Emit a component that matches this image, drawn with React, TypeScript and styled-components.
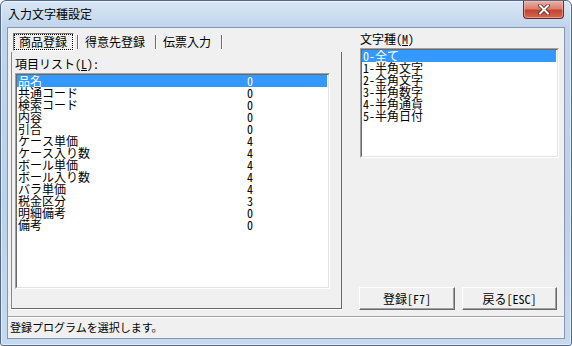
import React from 'react';
import styled, { createGlobalStyle } from 'styled-components';

const Global = createGlobalStyle`
  html, body { margin: 0; padding: 0; background: #ffffff; }
  body { width: 572px; height: 346px; overflow: hidden; }
  * { box-sizing: border-box; }
`;

const MONO = `"Noto Sans Mono CJK JP", "Noto Sans CJK JP", sans-serif`;
const UI = `"Noto Sans CJK JP", sans-serif`;

const Window = styled.div`
  width: 572px;
  height: 346px;
  border: 1px solid #52698a;
  border-radius: 6px 6px 3px 3px;
  background: linear-gradient(#d9e7f6, #c0d5ec 26px, #bcd2ea 60%, #c6daef);
  display: flex;
  flex-direction: column;
  padding: 0 6px 6px 6px;
  box-shadow: inset 0 0 0 1px rgba(255, 255, 255, 0.55);
`;

const TitleBar = styled.div`
  height: 26px;
  display: flex;
  align-items: flex-start;
  justify-content: space-between;
`;

const Title = styled.div`
  font-family: ${UI};
  font-size: 12px;
  line-height: 26px;
  padding-left: 1px;
  color: #000;
`;

const CloseButton = styled.div`
  width: 41px;
  height: 18px;
  margin-right: 1px;
  border: 1px solid #6b2b26;
  border-top: none;
  border-radius: 0 0 4px 4px;
  background: linear-gradient(#eab0a2, #d9806f 45%, #c4442f 55%, #d26a52);
  box-shadow: inset 0 0 0 1px rgba(255, 200, 190, 0.5);
  display: flex;
  align-items: center;
  justify-content: center;
`;

const Client = styled.div`
  flex: 1;
  background: #f0f0f0;
  border: 1px solid #8696ab;
  display: flex;
  flex-direction: column;
`;

const Main = styled.div`
  flex: 1;
  display: flex;
`;

const LeftCol = styled.div`
  width: 334px;
  padding: 3px 0 7px 3px;
  display: flex;
  flex-direction: column;
`;

const TabStrip = styled.div`
  height: 21px;
  display: flex;
  align-items: center;
  padding-left: 2px;
`;

const Tab = styled.div<{ $active?: boolean }>`
  height: 18px;
  padding: 0 6px 0 5px;
  font-family: ${UI};
  font-size: 12px;
  line-height: 16px;
  color: #000;
  border: 1px solid transparent;
  ${(p) =>
    p.$active &&
    `
    border-color: #7a7a7a #ffffff #ffffff #7a7a7a;
    outline: 1px dotted #000;
    outline-offset: -2px;
  `}
`;

const TabSep = styled.div`
  width: 2px;
  height: 14px;
  margin-left: 3px;
  border-left: 1px solid #6d6d6d;
  border-right: 1px solid #ffffff;
`;

const TabPage = styled.div`
  flex: 1;
  border-left: 1px solid #8a8a8a;
  border-right: 1px solid #6a6a6a;
  border-bottom: 1px solid #6a6a6a;
  box-shadow: 0 1px 0 #ffffff;
  padding: 4px 0 0 3px;
  display: flex;
  flex-direction: column;
`;

const FieldLabel = styled.div`
  font-family: ${MONO};
  font-size: 12px;
  height: 17px;
  line-height: 16px;
  color: #000;
`;

const ListOuter = styled.div<{ $w: number; $h: number }>`
  width: ${(p) => p.$w}px;
  height: ${(p) => p.$h}px;
  border: 1px solid;
  border-color: #a0a0a0 #ffffff #ffffff #a0a0a0;
`;

const ListInner = styled.div`
  width: 100%;
  height: 100%;
  border: 1px solid;
  border-color: #696969 #e3e3e3 #e3e3e3 #696969;
  background: #ffffff;
  overflow: hidden;
`;

const Row = styled.div<{ $sel?: boolean }>`
  height: 12px;
  line-height: 12px;
  font-family: ${MONO};
  font-size: 12px;
  padding-left: 1px;
  display: grid;
  grid-template-columns: 229px 1fr;
  white-space: nowrap;
  color: ${(p) => (p.$sel ? '#ffffff' : '#000000')};
  background: ${(p) => (p.$sel ? '#3399ff' : 'transparent')};
  margin-right: 1px;
`;

const RightCol = styled.div`
  flex: 1;
  padding: 3px 0 6px 18px;
  display: flex;
  flex-direction: column;
`;

const Spacer = styled.div`
  flex: 1;
`;

const ButtonRow = styled.div`
  display: flex;
  gap: 7px;
  margin-left: -1px;
`;

const Button = styled.div<{ $w: number }>`
  width: ${(p) => p.$w}px;
  height: 23px;
  border: 1px solid;
  border-color: #ffffff #696969 #696969 #ffffff;
  box-shadow: inset -1px -1px 0 #a0a0a0;
  background: #f0f0f0;
  font-family: ${MONO};
  font-size: 12px;
  line-height: 21px;
  text-align: center;
  color: #000;
`;

const StatusBar = styled.div`
  height: 22px;
  border-top: 1px solid #a0a0a0;
  box-shadow: inset 0 1px 0 #ffffff;
  padding-left: 2px;
  font-family: ${UI};
  font-size: 11px;
  letter-spacing: 0;
  line-height: 20px;
  color: #000;
`;

const items: [string, string][] = [
  ['品名', '0'],
  ['共通コード', '0'],
  ['検索コード', '0'],
  ['内容', '0'],
  ['引合', '0'],
  ['ケース単価', '4'],
  ['ケース入り数', '4'],
  ['ボール単価', '4'],
  ['ボール入り数', '4'],
  ['バラ単価', '4'],
  ['税金区分', '3'],
  ['明細備考', '0'],
  ['備考', '0'],
];

const kinds = ['0-全て', '1-半角文字', '2-全角文字', '3-半角数字', '4-半角通貨', '5-半角日付'];

export default function App() {
  return (
    <>
      <Global />
      <Window>
        <TitleBar>
          <Title>入力文字種設定</Title>
          <CloseButton>
            <svg width="12" height="11" viewBox="0 0 12 11">
              <path d="M2 1.5 L10 9.5 M10 1.5 L2 9.5" stroke="#5a2020" strokeWidth="3.6" strokeLinecap="square" />
              <path d="M2 1.5 L10 9.5 M10 1.5 L2 9.5" stroke="#ffffff" strokeWidth="2" strokeLinecap="square" />
            </svg>
          </CloseButton>
        </TitleBar>
        <Client>
          <Main>
            <LeftCol>
              <TabStrip>
                <Tab $active>商品登録</Tab>
                <TabSep />
                <Tab>得意先登録</Tab>
                <TabSep />
                <Tab>伝票入力</Tab>
                <TabSep />
              </TabStrip>
              <TabPage>
                <FieldLabel>項目リスト(<u>L</u>):</FieldLabel>
                <ListOuter $w={315} $h={216}>
                  <ListInner>
                    {items.map(([name, v], i) => (
                      <Row key={name} $sel={i === 0}>
                        <span>{name}</span>
                        <span>{v}</span>
                      </Row>
                    ))}
                  </ListInner>
                </ListOuter>
              </TabPage>
            </LeftCol>
            <RightCol>
              <FieldLabel>文字種(<u>M</u>)</FieldLabel>
              <ListOuter $w={199} $h={110}>
                <ListInner>
                  {kinds.map((k, i) => (
                    <Row key={k} $sel={i === 0}>
                      <span>{k}</span>
                    </Row>
                  ))}
                </ListInner>
              </ListOuter>
              <Spacer />
              <ButtonRow>
                <Button $w={96}>登録[F7]</Button>
                <Button $w={95}>戻る[ESC]</Button>
              </ButtonRow>
            </RightCol>
          </Main>
          <StatusBar>登録プログラムを選択します。</StatusBar>
        </Client>
      </Window>
    </>
  );
}
